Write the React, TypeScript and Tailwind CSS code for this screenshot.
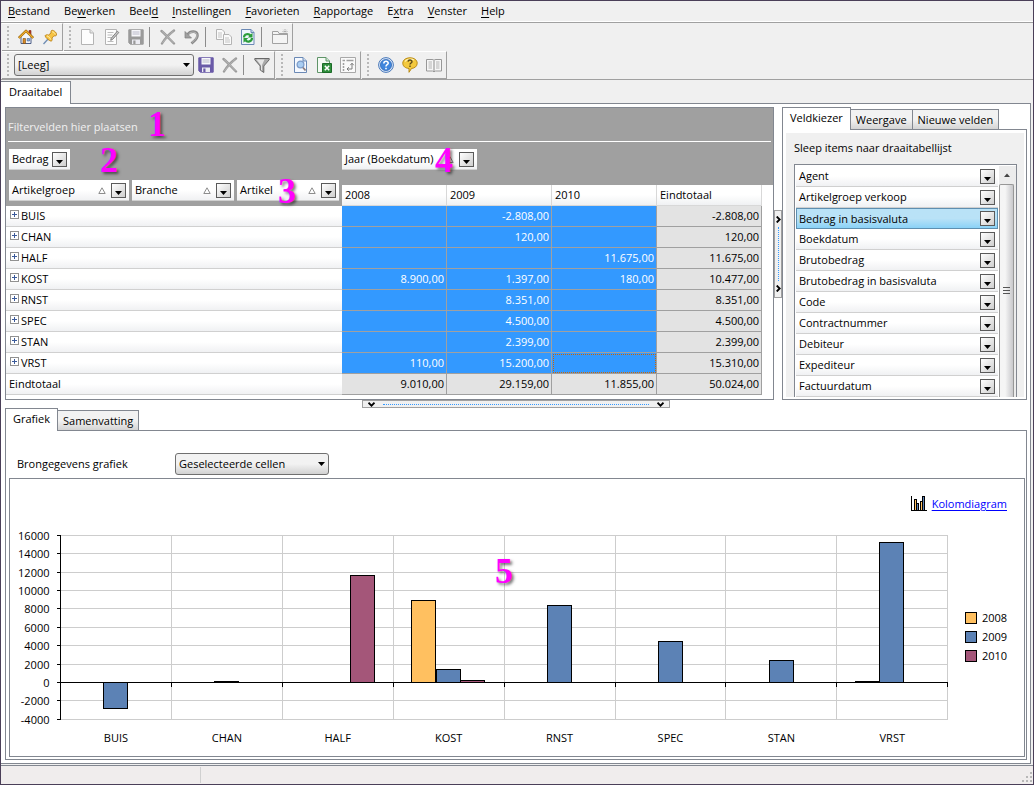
import type { ReactNode } from "react";

const menus = [
  { key: "B", rest: "estand" },
  { pre: "Be", key: "w", rest: "erken" },
  { pre: "Beel", key: "d", rest: "" },
  { key: "I", rest: "nstellingen" },
  { key: "F", rest: "avorieten" },
  { key: "R", rest: "apportage" },
  { pre: "E", key: "x", rest: "tra" },
  { key: "V", rest: "enster" },
  { key: "H", rest: "elp" },
];

const years = ["2008", "2009", "2010"];

const rows = [
  { name: "BUIS", cells: ["", "-2.808,00", ""], total: "-2.808,00", values: [0, -2808, 0] },
  { name: "CHAN", cells: ["", "120,00", ""], total: "120,00", values: [0, 120, 0] },
  { name: "HALF", cells: ["", "", "11.675,00"], total: "11.675,00", values: [0, 0, 11675] },
  { name: "KOST", cells: ["8.900,00", "1.397,00", "180,00"], total: "10.477,00", values: [8900, 1397, 180] },
  { name: "RNST", cells: ["", "8.351,00", ""], total: "8.351,00", values: [0, 8351, 0] },
  { name: "SPEC", cells: ["", "4.500,00", ""], total: "4.500,00", values: [0, 4500, 0] },
  { name: "STAN", cells: ["", "2.399,00", ""], total: "2.399,00", values: [0, 2399, 0] },
  { name: "VRST", cells: ["110,00", "15.200,00", ""], total: "15.310,00", values: [110, 15200, 0] },
];

const totals = ["9.010,00", "29.159,00", "11.855,00", "50.024,00"];

const fields = [
  "Agent",
  "Artikelgroep verkoop",
  "Bedrag in basisvaluta",
  "Boekdatum",
  "Brutobedrag",
  "Brutobedrag in basisvaluta",
  "Code",
  "Contractnummer",
  "Debiteur",
  "Expediteur",
  "Factuurdatum",
];

const colors = ["#ffc060", "#5c82b5", "#a45679"];

export default function App() {
  return (
    <div className="flex min-h-screen flex-col border border-[#4a3f58] bg-[#f0f0f0] font-['Open_Sans','Noto_Sans',sans-serif] text-[11px] leading-4 text-black">
      <nav className="flex h-[21px] items-center border-b border-white">
        {menus.map((m) => (
          <button key={m.key} className="px-[7px]">
            {m.pre}
            <u className="underline-offset-2">{m.key}</u>
            {m.rest}
          </button>
        ))}
      </nav>
      <Toolbars />
      <div className="flex pt-px">
        <button role="tab" aria-selected="true" className="relative -mb-px h-[23px] border-t border-r border-[#828790] bg-white px-2 pb-[2px]">
          Draaitabel
        </button>
      </div>
      <main className="mr-[2px] flex flex-1 flex-col border border-l-0 border-[#828790] bg-white pt-[3px] pr-[3px] pb-[3px] pl-1">
        <div className="flex">
          <Pivot />
          <div className="flex w-2 items-center">
            <div className="flex h-[88px] w-2 flex-col items-center justify-between border border-[#a0a0a0] bg-[#f0f0f0] py-[5px]">
              <SideChevron />
              <span className="my-1 flex-1 border-l border-dotted border-[#3399ff]" />
              <SideChevron />
            </div>
          </div>
          <FieldChooser />
        </div>
        <div className="flex h-2 justify-center">
          <div className="flex h-2 w-[308px] items-center justify-between border border-[#a0a0a0] bg-[#f0f0f0] px-[5px]">
            <DownChevron />
            <span className="mx-2 flex-1 border-t border-dotted border-[#3399ff]" />
            <DownChevron />
          </div>
        </div>
        <ChartPanel />
      </main>
      <footer className="mt-px flex h-[19px] items-center justify-between border-t border-[#828790] bg-[#f0eded]">
        <span className="h-4 w-[200px] border-r border-[#d0d0d0]" />
        <svg className="mt-1 mr-px h-[10px] w-[10px]" viewBox="0 0 10 10" fill="#b8b8b8">
          <path d="M8 0h2v2H8zM8 4h2v2H8zM8 8h2v2H8zM4 4h2v2H4zM4 8h2v2H4zM0 8h2v2H0z" />
        </svg>
      </footer>
    </div>
  );
}

function DownChevron() {
  return (
    <svg className="h-[5px] w-[7px]" viewBox="0 0 7 5" fill="none" stroke="#000" strokeWidth="1.800">
      <path d="M.5 .7l3 3 3-3" />
    </svg>
  );
}

function SideChevron() {
  return (
    <svg className="h-[7px] w-[5px]" viewBox="0 0 5 7" fill="none" stroke="#000" strokeWidth="1.800">
      <path d="M.7 .5l3 3-3 3" />
    </svg>
  );
}

function Toolbars() {
  return (
    <div>
      <div className="flex border-t border-[#a0a0a0] pl-px">
        <ToolGroup>
          <Tool label="Start"><HomeIcon /></Tool>
          <Tool label="Vastzetten"><PinIcon /></Tool>
        </ToolGroup>
        <ToolGroup>
          <Tool label="Nieuw"><PageIcon /></Tool>
          <Tool label="Wijzigen"><EditIcon /></Tool>
          <Tool label="Opslaan"><SaveIcon color="#9a9a9a" /></Tool>
          <Divider />
          <Tool label="Verwijderen"><CrossIcon /></Tool>
          <Tool label="Ongedaan maken"><UndoIcon /></Tool>
          <Divider />
          <Tool label="Kopiëren"><CopyIcon /></Tool>
          <Tool label="Vernieuwen"><RefreshIcon /></Tool>
          <Divider />
          <Tool label="Map"><FolderIcon /></Tool>
        </ToolGroup>
      </div>
      <div className="flex border-b border-[#a0a0a0] pl-px">
        <ToolGroup>
          <Select label="Weergave" value="[Leeg]" className="w-[180px]" />
          <Tool label="Weergave opslaan"><SaveIcon color="#6a5aa8" /></Tool>
          <Tool label="Weergave verwijderen"><CrossIcon /></Tool>
          <Divider />
          <Tool label="Filter"><FilterIcon /></Tool>
        </ToolGroup>
        <ToolGroup>
          <Tool label="Afdrukvoorbeeld"><PreviewIcon /></Tool>
          <Tool label="Naar Excel"><ExcelIcon /></Tool>
          <Tool label="Draaien"><PivotIcon /></Tool>
        </ToolGroup>
        <ToolGroup>
          <Tool label="Help"><HelpIcon /></Tool>
          <Tool label="Uitleg"><BalloonIcon /></Tool>
          <Tool label="Handleiding"><BookIcon /></Tool>
        </ToolGroup>
      </div>
    </div>
  );
}

function ToolGroup({ children }: { children: ReactNode }) {
  return (
    <div className="mr-px flex h-7 items-center border-r border-b border-[#a0a0a0] border-t border-t-white">
      <span className="ml-[5px] mr-[5px] h-[22px] border-l-2 border-dotted border-[#b8b8b8]" />
      {children}
    </div>
  );
}

function Tool({ label, children }: { label: string; children: ReactNode }) {
  return (
    <button aria-label={label} className="flex h-6 w-6 items-center justify-center">
      {children}
    </button>
  );
}

function Divider() {
  return <span className="ml-px mr-1.5 h-5 w-px bg-[#8c8c8c]" />;
}

function Select({ label, value, className, id }: { label?: string; value: string; className: string; id?: string }) {
  return (
    <div className={`relative ${className}`}>
      <select
        id={id}
        aria-label={label}
        className="block h-[22px] w-full appearance-none rounded-[3px] border border-[#707070] bg-linear-to-b from-[#f2f2f2] from-50% to-[#d2d2d2] pl-[3px] pr-5"
      >
        <option>{value}</option>
      </select>
      <svg className="pointer-events-none absolute top-[9px] right-1 h-1 w-[7px]" viewBox="0 0 7 4">
        <path d="M0 0h7L3.500 4z" />
      </svg>
    </div>
  );
}

function DropButton({ label }: { label: string }) {
  return (
    <button
      aria-label={label}
      className="flex h-[15px] w-[15px] shrink-0 items-end justify-center border border-[#5a5a5a] bg-linear-to-br from-white to-[#cfcfcf] pb-[2px]"
    >
      <svg className="h-1 w-[7px]" viewBox="0 0 7 4">
        <path d="M0 0h7L3.500 4z" />
      </svg>
    </button>
  );
}

function FieldChip({ name, sort, className }: { name: string; sort?: boolean; className: string }) {
  return (
    <div className={`flex h-[21px] items-center border-b border-[#d0d0d0] bg-linear-to-b from-white from-50% to-[#f0f1f3] pl-[3px] pr-[3px] font-normal ${className}`}>
      <span className="flex-1 text-left whitespace-nowrap">{name}</span>
      {sort && (
        <svg className="mr-[5px] h-[7px] w-2" viewBox="0 0 8 7" fill="none" stroke="#8c8c8c">
          <path d="M4 .8L7.200 6.500H.8z" />
        </svg>
      )}
      <DropButton label={`${name} filteren`} />
    </div>
  );
}

function Marker({ children, className }: { children: string; className: string }) {
  return (
    <span
      className={`pointer-events-none absolute z-10 font-['Liberation_Serif',serif] text-[36px] leading-6 font-bold text-[#ff00ff] [text-shadow:2px_2px_3px_#0008] ${className}`}
    >
      {children}
    </span>
  );
}

function Pivot() {
  return (
    <section className="relative flex-1 border border-[#828790] bg-white">
      <Marker className="top-1 left-[142px]">1</Marker>
      <Marker className="top-10 left-[94px]">2</Marker>
      <Marker className="top-[71px] left-[272px]">3</Marker>
      <Marker className="top-10 left-[429px]">4</Marker>
      <div className="bg-[#a0a0a0] px-[2px]">
        <div className="flex h-[34px] items-center border-b border-white pt-1 text-[#f0f0f0]">
          Filtervelden hier plaatsen
        </div>
      </div>
      <table className="w-full table-fixed border-separate border-spacing-0">
        <colgroup>
          <col className="w-[336px]" />
          <col className="w-[105px]" />
          <col className="w-[105px]" />
          <col className="w-[105px]" />
          <col className="w-[105px]" />
          <col />
        </colgroup>
        <thead>
          <tr className="h-[43px]">
            <th rowSpan={2} className="bg-[#a0a0a0] p-0 align-top">
              <div className="flex h-16 flex-col justify-between px-[3px] pt-[7px] pb-[5px]">
                <FieldChip name="Bedrag" className="w-[61px]" />
                <div className="flex gap-[3px]">
                  <FieldChip name="Artikelgroep" sort className="w-[120px]" />
                  <FieldChip name="Branche" sort className="w-[102px]" />
                  <FieldChip name="Artikel" sort className="w-[102px]" />
                </div>
              </div>
            </th>
            <th colSpan={5} className="bg-[#a0a0a0] p-0 pt-[7px] align-top">
              <FieldChip name="Jaar (Boekdatum)" sort className="w-[135px]" />
            </th>
          </tr>
          <tr className="h-[21px]">
            {[...years, "Eindtotaal"].map((y) => (
              <th
                key={y}
                scope="col"
                className="border-r border-b border-[#d8d8d8] bg-linear-to-b from-white from-50% to-[#f0f1f3] p-0 pl-[3px] text-left font-normal"
              >
                {y}
              </th>
            ))}
            <td />
          </tr>
        </thead>
        <tbody>
          {rows.map((r) => (
            <tr key={r.name} className="h-[21px]">
              <th scope="row" className="border-b border-[#d0d0d0] bg-linear-to-b from-white from-50% to-[#f0f1f3] p-0 font-normal">
                <div className="flex items-center gap-[2px] pl-1">
                  <button aria-label={`${r.name} uitklappen`} className="mb-1 flex h-[9px] w-[9px] items-center justify-center border border-[#919191] bg-white">
                    <svg className="h-[5px] w-[5px]" viewBox="0 0 5 5" stroke="#3b5a9a">
                      <path d="M0 2.500h5M2.500 0v5" />
                    </svg>
                  </button>
                  {r.name}
                </div>
              </th>
              {r.cells.map((c, i) => (
                <td
                  key={i}
                  className={`border-r border-b border-[#a0a0a0] bg-[#3399ff] p-0 pr-[2px] text-right text-white ${
                    r.name === "VRST" && i === 2 ? "outline outline-dotted -outline-offset-2 outline-[#cc6600]" : ""
                  }`}
                >
                  {c}
                </td>
              ))}
              <td className="border-r border-b border-[#a0a0a0] bg-[#e3e3e3] p-0 pr-[2px] text-right">{r.total}</td>
              <td />
            </tr>
          ))}
          <tr className="h-[21px]">
            <th scope="row" className="border-b border-[#d0d0d0] bg-linear-to-b from-white from-50% to-[#f0f1f3] p-0 pl-[3px] text-left font-normal">
              Eindtotaal
            </th>
            {totals.map((t) => (
              <td key={t} className="border-r border-b border-[#a0a0a0] bg-[#e3e3e3] p-0 pr-[2px] text-right">
                {t}
              </td>
            ))}
            <td />
          </tr>
        </tbody>
      </table>
    </section>
  );
}

function Tab({ active, children }: { active?: boolean; children: string }) {
  return active ? (
    <button role="tab" aria-selected="true" className="relative -mb-px h-[23px] border border-b-0 border-[#828790] bg-white px-[7px] pb-[2px]">
      {children}
    </button>
  ) : (
    <button
      role="tab"
      aria-selected="false"
      className="h-5 border border-l-0 border-b-0 border-[#828790] bg-linear-to-b from-[#f2f2f2] from-50% to-[#d4d4d4] px-[5px]"
    >
      {children}
    </button>
  );
}

function FieldChooser() {
  return (
    <aside className="flex w-[245px] flex-col">
      <div className="flex items-end">
        <Tab active>Veldkiezer</Tab>
        <Tab>Weergave</Tab>
        <Tab>Nieuwe velden</Tab>
      </div>
      <div className="flex flex-1 flex-col border border-[#828790] p-[3px] pb-[2px] pr-[2px]">
        <div className="flex flex-1 flex-col bg-[#f0f0f0] px-2 pt-[7px]">
          <p>Sleep items naar draaitabellijst</p>
          <div className="mt-2 flex w-[223px] flex-1 border border-b-0 border-[#828790] bg-white pt-px pl-px">
            <ul className="flex-1">
              {fields.map((f) => (
                <li
                  key={f}
                  className={
                    f === "Bedrag in basisvaluta"
                      ? "flex h-[21px] items-center border border-[#5e8fb0] bg-linear-to-b from-[#b9e2f7] from-50% to-[#8ad2f7] pl-[2px] pr-[2px]"
                      : "flex h-[21px] items-center border-b border-[#d0d0d0] bg-linear-to-b from-white from-50% to-[#f0f1f3] pl-[3px] pr-[3px]"
                  }
                >
                  <span className="flex-1">{f}</span>
                  <DropButton label={`${f} filteren`} />
                </li>
              ))}
            </ul>
            <div className="ml-px flex w-[17px] flex-col bg-[#ececec]">
              <svg className="h-[18px] w-4" viewBox="0 0 16 18">
                <path d="M5 11l3-3.500 3 3.500z" fill="#444" />
              </svg>
              <div className="mr-[2px] flex flex-1 items-center justify-center rounded-t-[2px] border border-b-0 border-[#979797] bg-linear-to-r from-[#f5f5f5] from-40% to-[#c8c8cb]">
                <svg className="h-2 w-[7px]" viewBox="0 0 7 8" stroke="#555">
                  <path d="M0 .5h7M0 3.500h7M0 6.500h7" />
                </svg>
              </div>
            </div>
          </div>
        </div>
      </div>
    </aside>
  );
}

function ChartPanel() {
  return (
    <section className="flex flex-1 flex-col">
      <div className="flex items-end">
        <Tab active>Grafiek</Tab>
        <Tab>Samenvatting</Tab>
      </div>
      <div className="flex flex-1 flex-col border border-[#828790] px-[3px] pb-[2px] pr-px">
        <div className="flex h-[47px] items-center pt-[22px] pb-[3px] pl-2">
          <label htmlFor="bron" className="w-[158px]">
            Brongegevens grafiek
          </label>
          <Select id="bron" value="Geselecteerde cellen" className="w-[154px]" />
        </div>
        <div className="relative flex-1 border border-[#828790]">
          <Marker className="top-[80px] left-[485px]">5</Marker>
          <div className="flex h-[41px] items-center justify-end gap-[5px] pt-2 pr-[17px]">
            <svg className="h-[15px] w-4" viewBox="0 0 16 15" shapeRendering="crispEdges">
              <path d="M.5 0v14.500H16" fill="none" stroke="#000" />
              <path d="M3.500 3.500h2v11h-2z" fill="#ffc060" stroke="#000" />
              <path d="M5.500 7.500h2v7h-2z" fill="#5c82b5" stroke="#000" />
              <path d="M9.500 5.500h2v9h-2z" fill="#ffc060" stroke="#000" />
              <path d="M11.500 .5h2v14h-2z" fill="#5c82b5" stroke="#000" />
            </svg>
            <a href="#kolomdiagram" className="text-[#0000ff] underline underline-offset-2">
              Kolomdiagram
            </a>
          </div>
          <BarChart />
        </div>
      </div>
    </section>
  );
}

const LEFT = 50.5;
const COL = 110.9;
const yFor = (v: number) => Math.round(162 - v * 0.0092) + 0.5;

function BarChart() {
  const ticks = [16000, 14000, 12000, 10000, 8000, 6000, 4000, 2000, 0, -2000, -4000];
  const colX = (i: number) => Math.floor(LEFT + i * COL) + 0.5;

  return (
    <svg className="block h-auto w-full" viewBox="0 0 1014 235" role="img" aria-label="Kolomdiagram">
      <g stroke="#cdcdcd" shapeRendering="crispEdges">
        {ticks.map((t) => (
          <path key={t} d={`M${LEFT} ${yFor(t)}H${colX(8)}`} />
        ))}
        {rows.map((r, i) => (
          <path key={r.name} d={`M${colX(i + 1)} ${yFor(16000)}V${yFor(-4000)}`} />
        ))}
      </g>
      <g stroke="#000" shapeRendering="crispEdges">
        {rows.map((r, i) =>
          r.values.map((v, n) => {
            if (!v) return null;
            const x = Math.floor(LEFT + (i + 0.5) * COL + (n - 1.5) * 24.6) + 0.5;
            const top = Math.min(yFor(v), yFor(0));
            return <rect key={`${i}-${n}`} x={x} y={top} width={24} height={Math.abs(yFor(v) - yFor(0))} fill={colors[n]} />;
          }),
        )}
        <path d={`M${LEFT} ${yFor(16000)}V${yFor(-4000)}M${LEFT} ${yFor(0)}H${colX(8)}`} />
        {ticks.map((t) => (
          <path key={t} d={`M${LEFT - 4} ${yFor(t)}h4`} />
        ))}
        {rows.map((r, i) => (
          <path key={r.name} d={`M${colX(i + 1)} ${yFor(0)}v4`} />
        ))}
      </g>
      <g fontSize="11">
        {ticks.map((t) => (
          <text key={t} x={LEFT - 11} y={yFor(t) + 4} textAnchor="end">
            {t}
          </text>
        ))}
        {rows.map((r, i) => (
          <text key={r.name} x={LEFT + (i + 0.5) * COL} y={222} textAnchor="middle">
            {r.name}
          </text>
        ))}
        {years.map((y, i) => (
          <g key={y}>
            <rect x={955.5} y={92.5 + i * 19} width={11} height={11} fill={colors[i]} stroke="#000" />
            <text x={972} y={102 + i * 19}>
              {y}
            </text>
          </g>
        ))}
      </g>
    </svg>
  );
}

function Icon({ children }: { children: ReactNode }) {
  return (
    <svg className="h-4 w-4" viewBox="0 0 16 16" fill="none" strokeLinejoin="round">
      {children}
    </svg>
  );
}

function HomeIcon() {
  return (
    <Icon>
      <path d="M11 1.500h2V6h-2z" fill="#b5392b" stroke="#7d241a" strokeWidth=".6" />
      <path d="M3 8l5-5 5 5v6.500H3z" fill="#f3f6fb" stroke="#4a5c86" />
      <path d="M.8 9L8 1.800 15.200 9" stroke="#9c6a10" strokeWidth="2.400" />
      <path d="M1.200 8.700L8 2l6.800 6.700" stroke="#f0ad2c" strokeWidth="1.200" />
      <path d="M5 9.500h2.500v5H5z" fill="#d98a25" stroke="#7c4c10" strokeWidth=".6" />
      <path d="M9.200 9.500h2.300V12H9.200z" fill="#7fb2ea" stroke="#4a5c86" strokeWidth=".6" />
    </Icon>
  );
}

function PinIcon() {
  return (
    <Icon>
      <path d="M6.500 9.500L1.500 15" stroke="#6f8db3" strokeWidth="1.300" />
      <path d="M9.500 1.500c1-1 5.500 1.500 5 4.500-.2 1-1.500 1-2.500.8L10 9c.5 1.500 0 3-.8 3.200C7.500 12 3.500 8.800 3 6.800c.5-1 2-1.300 3.500-.8L9 4c-.2-1 0-2 .5-2.500z" fill="#f6c342" stroke="#b57a12" strokeWidth=".8" />
      <path d="M10.200 2.800c1.500.2 2.800 1.300 3 2.700M5 6.800c1.500.5 3 2 3.800 3.700" stroke="#fff0b0" />
    </Icon>
  );
}

function PageIcon() {
  return (
    <Icon>
      <path d="M1.500.5H10l3.500 3.500v11.500h-12z" fill="#fdfdfd" stroke="#b4b4b4" />
      <path d="M10 .5V4h3.500" fill="#e5e5e5" stroke="#b4b4b4" />
    </Icon>
  );
}

function EditIcon() {
  return (
    <Icon>
      <path d="M1.500.5h11v15h-11z" fill="#fdfdfd" stroke="#b4b4b4" />
      <path d="M3.500 3.500h6M3.500 6h5M3.500 8.500h4M3.500 12.500h6" stroke="#bcbcbc" />
      <path d="M14.800 3.500l-6.300 7-1.800.8.500-2L13.300 2.200z" fill="#c8c8c8" stroke="#777" strokeWidth=".9" />
    </Icon>
  );
}

function SaveIcon({ color }: { color: string }) {
  return (
    <Icon>
      <path d="M.8.8h14.400v14.400H2.300L.8 13.700z" fill={color} stroke={color} />
      <path d="M3.500 1h9v6.500h-9z" fill="#f7f7fb" />
      <path d="M4.500 3h7M4.500 5h7" stroke="#b9b9c8" />
      <path d="M4 10.500h8V15H4z" fill="#ececf2" />
      <path d="M5.300 11.500h2.200V15H5.300z" fill={color} />
    </Icon>
  );
}

function CrossIcon() {
  return (
    <Icon>
      <path d="M1.500 2C5 5 10 10.500 14 14.500M14 1.500C10 4.500 5 9.500 2 14.500" stroke="#9b9b9b" strokeWidth="2.400" strokeLinecap="round" />
      <path d="M2 2.300C6 6 10 10 13.500 14M13.500 2C10 5 5.500 9.500 2.500 14" stroke="#bdbdbd" strokeWidth=".8" />
    </Icon>
  );
}

function UndoIcon() {
  return (
    <Icon>
      <path d="M3.500 5.500C6.500 1.500 13.500 1.500 13.500 6.500c0 3.500-2.500 4.500-6 8" stroke="#8a8a8a" strokeWidth="2.600" />
      <path d="M1 2.500v6.500h6.500z" fill="#a0a0a0" stroke="#7f7f7f" strokeWidth=".7" />
      <path d="M4.500 5C7.500 2 13 2.500 13 6.500c0 3-2 4.300-5 7" stroke="#c4c4c4" strokeWidth=".8" />
    </Icon>
  );
}

function CopyIcon() {
  return (
    <Icon>
      <path d="M.5.5h5.500l2.500 2.500v7.500h-8z" fill="#fafafa" stroke="#b4b4b4" />
      <path d="M2 4h4M2 6h4M2 8h4" stroke="#c4c4c4" />
      <path d="M7.500 5.500H13l2.500 2.500v7.500h-8z" fill="#fafafa" stroke="#b4b4b4" />
      <path d="M9 9h4M9 11h5M9 13h5" stroke="#c4c4c4" />
    </Icon>
  );
}

function RefreshIcon() {
  return (
    <Icon>
      <path d="M1.500.5H11l3 3v12H1.500z" fill="#eef4fc" stroke="#6b89b5" />
      <path d="M11 .5v3h3" fill="#c9daf0" stroke="#6b89b5" />
      <path d="M4 8.500C4 5 8.500 4 10.500 6.500M12 9c0 3.500-4.500 4.800-6.500 2.300" stroke="#2b9d3a" strokeWidth="2.200" />
      <path d="M12.500 3.800v4.700H7.800zM3.500 13.800V9h4.800z" fill="#2b9d3a" />
    </Icon>
  );
}

function FolderIcon() {
  return (
    <Icon>
      <path d="M.5 14.500v-12H6L7 4.500h8.500v10z" fill="#f4f4f4" stroke="#a2a2a2" />
      <path d="M.5 5.500h15" stroke="#a2a2a2" />
      <path d="M13 0v5M10.500 2.500h5M11.300.8l3.400 3.400M14.700.8l-3.400 3.400" stroke="#9d9d9d" strokeWidth=".8" strokeDasharray="1 1" />
    </Icon>
  );
}

function FilterIcon() {
  return (
    <Icon>
      <path d="M.8 1.500h14.400v1.300L9.800 9v6.500L6.200 13V9L.8 2.800z" fill="#a9a9a9" stroke="#686868" />
      <path d="M2.500 2.500h8L8 8v5.500L7 13V8.500z" fill="#e6e6e6" />
    </Icon>
  );
}

function PreviewIcon() {
  return (
    <Icon>
      <path d="M2.500.5H11l3.500 3.500v11.500h-12z" fill="#f5f9ff" stroke="#6b89b5" />
      <path d="M11 .5V4h3.500" fill="#c9daf0" stroke="#6b89b5" />
      <circle cx="8.500" cy="7.500" r="3.400" fill="#a9cdf2" stroke="#7d9cc8" strokeWidth="1.300" />
      <path d="M11 10.500l2.500 3" stroke="#8b7b7a" strokeWidth="1.800" />
    </Icon>
  );
}

function ExcelIcon() {
  return (
    <Icon>
      <path d="M1.500.5H10l3.500 3.500v11.500h-12z" fill="#f5fbf5" stroke="#5f9468" />
      <path d="M10 .5V4h3.500" fill="#cfe6d2" stroke="#5f9468" />
      <path d="M6.500 6.500h9v9h-9z" fill="#2f8f3c" stroke="#1c6b28" />
      <path d="M8.800 8.800l4.400 4.400M13.200 8.800l-4.400 4.400" stroke="#fff" strokeWidth="1.600" />
    </Icon>
  );
}

function PivotIcon() {
  return (
    <Icon>
      <path d="M.5.5h15v15H.5z" fill="#fafafa" stroke="#a8a8a8" />
      <path d="M2.500 3.500H5M6.500 3.500h7M3.500 6v2M3.500 9v2M3.500 12v2" stroke="#a0a0a0" strokeWidth="1.500" />
      <path d="M12 6.500V12H7M10.300 8.200L12 6.200l1.700 2M8.800 10.200L7 12l1.800 1.800" stroke="#7c7c7c" />
    </Icon>
  );
}

function HelpIcon() {
  return (
    <Icon>
      <circle cx="8" cy="8" r="7.400" fill="#d9e8fa" stroke="#4a78b8" />
      <circle cx="8" cy="8" r="5.600" fill="#3f86dd" stroke="#1f56a5" strokeWidth=".6" />
      <path d="M5.800 6.500C6 3.500 10.300 3.700 10.200 6.200 10.100 7.700 8 7.800 8 9.500M8 10.700v1.600" stroke="#fff" strokeWidth="1.600" />
    </Icon>
  );
}

function BalloonIcon() {
  return (
    <Icon>
      <path d="M8 .8c4.200 0 7.200 2.300 7.200 5.400s-2.500 5-5.700 5.300L7 15.300v-3.800C3.300 11.200.8 9.200.8 6.200.8 3.100 3.800.8 8 .8z" fill="#f3c93e" stroke="#b98a16" />
      <path d="M3 4.500C4.500 2 9 1.500 12 3" stroke="#fff3b5" strokeWidth="1.200" />
      <path d="M6 4.700C6.300 2.300 10 2.500 10 4.700 9.900 6 8 6.200 8 7.600M8 8.500V10" stroke="#5c4a1a" strokeWidth="1.400" />
    </Icon>
  );
}

function BookIcon() {
  return (
    <Icon>
      <path d="M.5 2.500H6c1 0 1.500.3 2 .8.500-.5 1-.8 2-.8h5.500V14H9.500L8 14.800 6.500 14h-6z" fill="#f6f6f6" stroke="#989898" />
      <path d="M8 3.500v11" stroke="#8a8a8a" />
      <path d="M2.500 5H6M2.500 7H6M2.500 9H6M2.500 11H6M10 5h3.500M10 7h3.500M10 9h3.500M10 11h3.500" stroke="#b4b4b4" />
    </Icon>
  );
}
